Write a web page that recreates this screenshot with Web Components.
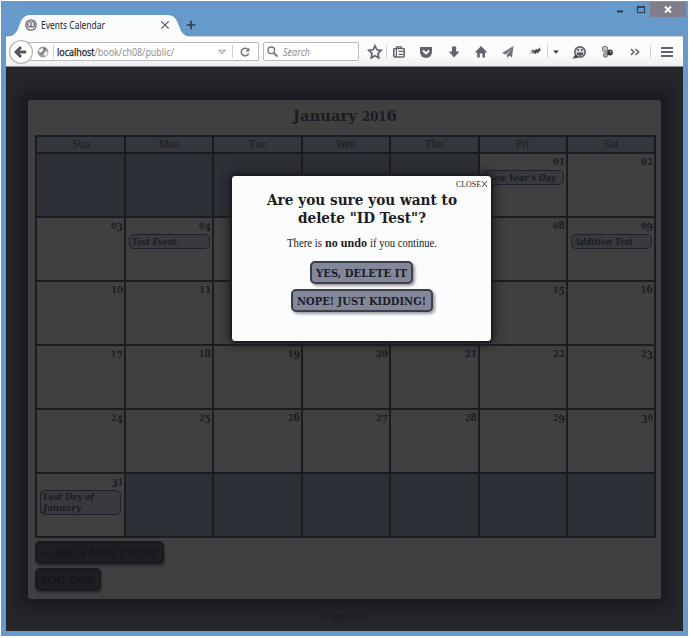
<!DOCTYPE html>
<html lang="en"><head><meta charset="utf-8"><title>Events Calendar</title>
<style>
html,body{margin:0;background:#fff;overflow:hidden}
</style></head><body>
<browser-window></browser-window>
<script>
const define=(name,html,init)=>customElements.define(name,class extends HTMLElement{
  connectedCallback(){
    if(this.shadowRoot)return;
    this.attachShadow({mode:'open'}).innerHTML=typeof html==='function'?html(this):html;
    if(init)init(this);
  }});

/* old-style figures: 0-2 at x-height, 3 4 5 7 9 below the baseline */
const figures=(text,s)=>{
  let prev=0;
  return text.replace(/\d/g,d=>{
    const low='34579'.includes(d)?s*.19:0,dy=(low-prev).toFixed(2);prev=low;
    return `<tspan dy="${dy}" font-size="${'012'.includes(d)?s*.8:s*1.02}">${d}</tspan>`;
  });
};
/* text fitted to a fixed width, baseline aligned */
define('fit-text',el=>{
  const w=+el.getAttribute('w'),s=+el.getAttribute('size'),h=+(el.getAttribute('h')||Math.round(s*1.25));
  const raw=el.getAttribute('text'),lead=el.getAttribute('lead');
  const body=el.hasAttribute('figures')?figures(raw,s):lead?`<tspan fill="#202028" stroke="#202028" stroke-width=".25">${lead}</tspan>${raw}`:raw;
  return `<style>:host{display:block;width:${w}px;height:${h}px;flex:none}svg{display:block;overflow:visible}</style>
  <svg width="${w}" height="${h}"><text x="0" y="${h-Math.round(s*.27)}" textLength="${w}" lengthAdjust="spacingAndGlyphs" fill="currentColor" font-size="${s}">${body}</text></svg>`;
});

const icons={
 star:'<path d="M8 1.8l1.9 4 4.3.6-3.2 3 .8 4.4L8 11.7l-3.8 2.1.8-4.4-3.2-3 4.3-.6z" fill="none" stroke="#63636e" stroke-width="1.7"/>',
 clip:'<rect x="2.8" y="4.5" width="10.4" height="8.5" rx="1" fill="#fff" stroke="#63636e" stroke-width="1.6"/><path d="M5.8 4V2.8h4.4V4M5.4 5v8M7.5 7.3h5M7.5 10.3h5" fill="none" stroke="#63636e" stroke-width="1.3"/>',
 pocket:'<path d="M2 3h12v5a6 6 0 0 1-12 0z" fill="#63636e"/><path d="M5 6.5l3 3 3-3" fill="none" stroke="#fff" stroke-width="1.8"/>',
 down:'<path d="M6 2.5h4.2v5h3.3L8.1 13.5 2.7 7.5H6z" fill="#63636e"/>',
 home:'<path d="M8 2l6 6-1 1-1-.8v5.3H9.4V9.5H6.8v4H4.2V8.2l-1 .8-1-1z" fill="#63636e"/>',
 plane:'<path d="M13.5 2L2 9l3.8 1.4L12 4.5 7 10.5v3.8l2-2.5 3 1.4z" fill="#70707a"/>',
 bug:'<path d="M2.5 7l3-1.6 1 1.2 2-1.8.6 1 3.4-2.6-.6 2.6 1.6.4-2.4 1.4-1 2-1.4-1-1.6 1.8-.8-1.6-2.2 1 .6-1.6z" fill="#4b4b53"/><path d="M2 9.5l4-3" stroke="#aaa"/>',
 face:'<circle cx="8" cy="8" r="5.2" fill="#ddd" stroke="#63636e" stroke-width="1.7"/><path d="M4.8 8.5h6.4a3.2 3.2 0 0 1-6.4 0z" fill="#55555f"/><path d="M6.2 5v2M9.8 5v2M3.5 11L2 13.7l3.8-.8" stroke="#55555f" stroke-width="1.5"/>',
 balls:'<circle cx="6" cy="5" r="2.8" fill="#bbb" stroke="#777"/><circle cx="6.5" cy="11" r="2.3" fill="#aaa" stroke="#777"/><circle cx="11" cy="8.5" r="2.9" fill="#34343b"/><circle cx="11.7" cy="7.8" r=".9" fill="#bbb"/>',
 more:'<path d="M4 5l3 3-3 3M8.5 5l3 3-3 3" fill="none" stroke="#63636e" stroke-width="1.6"/>',
 menu:'<path d="M2 4h12M2 8h12M2 12h12" stroke="#63636e" stroke-width="2"/>',
 caret:'<path d="M5.2 6.6h5.6L8 9.8z" fill="#33333a"/>',
 drop:'<path d="M4.8 6.2h6.4L8 9.6z" fill="none" stroke="#aaaab2" stroke-width="1.1"/>',
 reload:'<path d="M11 5.6A3.8 3.8 0 1 0 11.6 9.4" fill="none" stroke="#74747e" stroke-width="1.5"/><path d="M12.4 3.4v4H8.4z" fill="#74747e"/>',
 search:'<circle cx="6.3" cy="6.3" r="3.3" fill="none" stroke="#73737d" stroke-width="1.4"/><path d="M9 9l3.4 3.6" stroke="#73737d" stroke-width="1.9"/>',
 globe:'<circle cx="8" cy="8" r="5.4" fill="#999aa3"/><path d="M3.5 6l4-2 1 3-3 2zM9 9l3-2 .5 3-3 2.5z" fill="#fff"/><path d="M5 10l3-2 2-4" stroke="#5b5b65" fill="none"/>',
 fav:'<circle cx="8" cy="8" r="5.2" fill="#eee" stroke="#6c6c76" stroke-width="1.3"/><path d="M4.8 6v3q1.6 2 3.2 0q1.6 2 3.2 0V6M8 6v3M5 5h6" stroke="#55555f" stroke-width="1.1" fill="none"/>',
 cross:'<path d="M4.3 4.3l7.4 7.4M11.7 4.3l-7.4 7.4" stroke="#55555f" stroke-width="1.2"/>',
 plus:'<path d="M8 3.7v8.6M3.7 8h8.6" stroke="#2b3c4d" stroke-width="1.6"/>',
 back:'<circle cx="8" cy="8" r="11.4" fill="#fff" stroke="#b5b6bc" stroke-width="1.3"/><path d="M8 3L3 8l5 5M3.6 8h9.6" fill="none" stroke="#55555f" stroke-width="2.9"/>'
};
define('ui-icon',el=>`<style>:host{display:block;width:16px;height:16px;flex:none}svg{display:block;overflow:visible}</style><svg width="16" height="16">${icons[el.getAttribute('name')]}</svg>`);

define('tab-strip',`<style>
:host{display:flex;height:35px;align-items:flex-start;position:relative}
.tab{width:180px;height:21px;margin:13px 0 0 6px;position:relative;display:flex;align-items:center;font:10px "Noto Sans",sans-serif;color:#24242c}
.tab>svg{position:absolute;left:0;top:1px}
.tab>*:not(svg){position:relative}
.win{margin-left:auto;display:flex;height:16px}
.win svg{display:block}
</style>
<div class="tab"><svg width="182" height="22"><path d="M0 22Q8 21 11 14L14 6Q17 0 23 0H161Q167 0 170 6L174 16Q177 21 182 22Z" fill="#fbfcfc"/></svg>
<ui-icon name="fav" style="margin-left:16px"></ui-icon><fit-text w="64" size="10" h="14" text="Events Calendar" style="margin-left:2px"></fit-text><ui-icon name="cross" style="margin-left:52px"></ui-icon><ui-icon name="plus" style="margin-left:10px"></ui-icon></div>
<div class="win"><svg width="75" height="18"><path d="M4 10.5h6" stroke="#25323e" stroke-width="1.8"/><rect x="24.5" y="5.5" width="7" height="6" fill="none" stroke="#38434f" stroke-width="1.2"/><path d="M24 6h8" stroke="#38434f" stroke-width="2"/><rect x="37" y="1" width="36" height="15" fill="#807e8b"/><path d="M52 5.5l6 6M58 5.5l-6 6" stroke="#fff" stroke-width="1.9"/></svg></div>`);

define('tool-bar',`<style>
:host{display:flex;height:31px;margin:0 5px;box-sizing:border-box;background:linear-gradient(#fcfcfc 60%,#eeeef0);border-top:1px solid #cfd0d5;border-bottom:1px solid #888890;align-items:center;font:10px "Noto Sans",sans-serif;color:#8f9097}
.url,.find{flex:none;height:19px;box-sizing:border-box;border:1px solid #b9bac0;background:#fff;display:flex;align-items:center;border-radius:2px}
.url{width:236px;margin-left:18px;padding-left:4px;border-left:0}
.find{width:96px;margin:0 0 0 4px;padding-left:1px;font-style:italic}
.sep{width:1px;height:13px;background:#cfd0d5;flex:none}
.back{margin:0 -24px 0 7px;z-index:1;position:relative}
.tools{flex:none;display:flex;align-items:center;padding-left:8px}
</style>
<ui-icon class="back" name="back"></ui-icon>
<div class="url"><ui-icon name="globe" style="margin-left:8px"></ui-icon><i class="sep" style="margin:0 3px 0 2px"></i><fit-text w="117" size="10" h="14" lead="localhost" text="/book/ch08/public/"></fit-text><ui-icon name="drop" style="margin-left:40px"></ui-icon><i class="sep" style="margin:0 4px 0 2px"></i><ui-icon name="reload"></ui-icon></div>
<div class="find"><ui-icon name="search"></ui-icon><fit-text w="27" size="10" h="14" text="Search" style="margin-left:2px"></fit-text></div>
<div class="tools">${[['star',3,4],['clip',11],['pocket',12],['down',11],['home',11],['plane',12],['bug',3,0],['caret',8],['face',11],['balls',12],['more',7,8],['menu',0]].map(([n,a,b])=>`<ui-icon name="${n}" style="margin-right:${a}px"></ui-icon>${b===undefined?'':`<i class="sep" style="margin-right:${b}px"></i>`}`).join('')}</div>`);

define('push-button',el=>`<style>
:host{display:flex;justify-content:center;align-items:center;box-sizing:border-box;height:23px;border:2px solid #3c3f49;border-radius:5px;background:#82889a;box-shadow:2px 2px 3px #9a9aa2;color:#1c1d26;font-family:"DejaVu Serif","Liberation Serif",serif;font-weight:bold}
:host([dim]){background:#1d1e24;border-color:#191a20;box-shadow:1px 2px 2px #2b2d34;color:#15161b;justify-content:flex-start;padding-left:4px}
</style><fit-text w="${el.getAttribute('w')}" size="10.5" h="14" text="${el.textContent}"></fit-text>`);

define('calendar-day',el=>{const e=el.getAttribute('event'),n=el.getAttribute('n');return `<style>
:host{display:block;box-sizing:border-box;background:${n?'#404040':'#2e3038'};color:#1b1c22;font-family:"DejaVu Serif","Liberation Serif",serif;font-weight:bold;padding:1px 1px 0 3px}
.n{display:flex;justify-content:flex-end}
.e{box-sizing:border-box;width:81px;border:1px solid #1d1e26;border-radius:5px;background:#393a40;margin-top:2px;padding:0 2px 1px;font-style:italic}
</style>${n?`<div class="n"><fit-text figures w="12" size="10.5" h="13" text="${n}"></fit-text></div>`:''}${e?`<div class="e">${e.split('|').map(t=>{const[a,w]=t.split('~');return `<fit-text w="${w}" size="8.5" h="${e.includes('|')?11:12}" text="${a}"></fit-text>`}).join('')}</div>`:''}`});

const events={1:"New Year's Day~70",4:'Test Event~45',9:'Addition Test~59',31:'Last Day of~51|January~38'};
const cells=[];
for(let i=0;i<42;i++){const d=i-4;cells.push(d>0&&d<32?`<calendar-day n="${String(d).padStart(2,'0')}" ${events[d]?`event="${events[d]}"`:''}></calendar-day>`:'<calendar-day></calendar-day>')}
define('month-grid',`<style>
:host{display:block}
.head,.days{display:grid;grid-template-columns:87px repeat(6,86.4px);gap:2px;background:#1b1c22;border:2px solid #1b1c22;box-sizing:border-box;width:621px}
.head{height:17px;border-bottom:0}
.head div{background:#35373e;display:flex;justify-content:center;align-items:center;color:#1b1c22;font-family:"Liberation Serif",serif}
.head fit-text{margin-top:-2px}
.days{grid-template-rows:repeat(6,62.05px)}
</style><div class="head">${[['Sun',18],['Mon',20],['Tue',17],['Wed',19],['Thu',18],['Fri',13],['Sat',14]].map(([d,w])=>`<div><fit-text w="${w}" size="12" h="15" text="${d}"></fit-text></div>`).join('')}</div><div class="days">${cells.join('')}</div>`);

define('confirm-dialog',`<style>
:host{display:flex;flex-direction:column;align-items:center;box-sizing:border-box;width:261px;height:167px;background:#fbfcfc;border:1px solid #1b1c22;border-radius:4px;box-shadow:0 0 0 1px #1b1c22,0 0 12px 2px #1b1c22;color:#1b1c22;font-family:"DejaVu Serif","Liberation Serif",serif}
.x{align-self:flex-end;display:flex;align-items:center;height:14px;margin:1px 3px 0 0;font-family:"Liberation Serif",serif}
.p{display:flex;font-family:"Liberation Serif",serif;margin:6px 0 11px}
.h{font-weight:bold}
push-button{margin-bottom:5px}
</style>
<div class="x"><fit-text w="25" size="8" h="10" text="CLOSE"></fit-text><svg width="7" height="8"><path d="M1 1l5 6M6 1L1 7" stroke="#44454e"/></svg></div>
<fit-text class="h" w="190" size="15" h="18" text="Are you sure you want to"></fit-text>
<fit-text class="h" w="128" size="15" h="18" text="delete &quot;ID Test&quot;?"></fit-text>
<div class="p"><fit-text w="35" size="12" h="17" text="There is"></fit-text><fit-text w="42" size="12" h="17" style="font-weight:bold;margin:0 3px" text="no undo"></fit-text><fit-text w="67" size="12" h="17" text="if you continue."></fit-text></div>
<push-button w="91" style="width:103px">YES, DELETE IT</push-button>
<push-button w="129" style="width:142px">NOPE! JUST KIDDING!</push-button>`);

define('page-view',`<style>
:host{display:block;position:relative;height:564px;margin:0 5px;box-sizing:border-box;padding:33px 0 0 22px;background:#24262c;overflow:hidden;font-family:"DejaVu Serif","Liberation Serif",serif}
.card{width:633px;height:499px;box-sizing:border-box;padding:7px 7px 0;background:#404040;border-radius:3px;box-shadow:0 0 14px 8px #191a20;color:#1b1c22}
.title{display:flex;justify-content:center;height:28px;font-weight:bold}
push-button{margin-top:4px}
confirm-dialog{position:absolute;left:225px;top:108px}
.foot{display:flex;justify-content:center;width:633px;margin-top:9px;color:#17181d}
</style>
<div class="card"><div class="title"><fit-text figures w="104" size="15" h="18" text="January 2016"></fit-text></div>
<month-grid></month-grid>
<push-button dim w="116" style="width:129px;margin-top:3px">+ ADD A NEW EVENT</push-button>
<push-button dim w="53" style="width:66px">LOG OUT</push-button></div>
<div class="foot"><fit-text w="48" size="9" h="13" text="Logged In"></fit-text></div>
<confirm-dialog></confirm-dialog>`);

define('browser-window',`<style>:host{display:block;box-sizing:border-box;width:687px;height:635px;margin:1px;background:#659aca}</style><tab-strip></tab-strip><tool-bar></tool-bar><page-view></page-view>`);
</script></body></html>
